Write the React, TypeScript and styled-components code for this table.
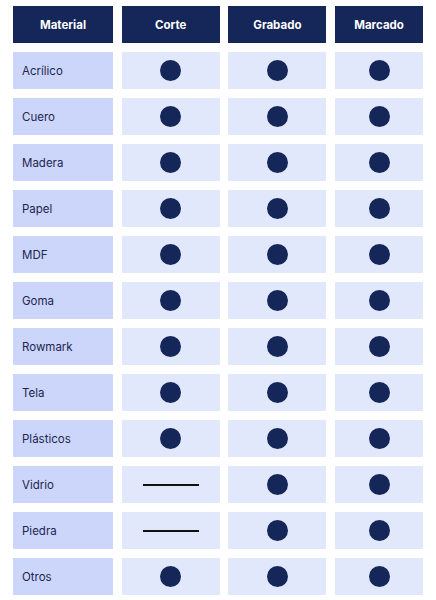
import React from "react";
import styled, { createGlobalStyle } from "styled-components";

const colors = {
  navy: "#152659",
  materialCell: "#ccd6fb",
  cell: "#e2e8fc",
  text: "#1d2550",
};

type Support = "yes" | "no";

interface MaterialRow {
  name: string;
  corte: Support;
  grabado: Support;
  marcado: Support;
}

const materials: MaterialRow[] = [
  { name: "Acrílico", corte: "yes", grabado: "yes", marcado: "yes" },
  { name: "Cuero", corte: "yes", grabado: "yes", marcado: "yes" },
  { name: "Madera", corte: "yes", grabado: "yes", marcado: "yes" },
  { name: "Papel", corte: "yes", grabado: "yes", marcado: "yes" },
  { name: "MDF", corte: "yes", grabado: "yes", marcado: "yes" },
  { name: "Goma", corte: "yes", grabado: "yes", marcado: "yes" },
  { name: "Rowmark", corte: "yes", grabado: "yes", marcado: "yes" },
  { name: "Tela", corte: "yes", grabado: "yes", marcado: "yes" },
  { name: "Plásticos", corte: "yes", grabado: "yes", marcado: "yes" },
  { name: "Vidrio", corte: "no", grabado: "yes", marcado: "yes" },
  { name: "Piedra", corte: "no", grabado: "yes", marcado: "yes" },
  { name: "Otros", corte: "yes", grabado: "yes", marcado: "yes" },
];

const headers = ["Material", "Corte", "Grabado", "Marcado"];

export default function App() {
  return (
    <>
      <GlobalStyle />
      <Table>
        {headers.map((h) => (
          <HeaderCell key={h}>{h}</HeaderCell>
        ))}
        {materials.map((m) => (
          <React.Fragment key={m.name}>
            <MaterialCell>{m.name}</MaterialCell>
            {[m.corte, m.grabado, m.marcado].map((s, i) => (
              <Cell key={i}>{s === "yes" ? <Dot /> : <Dash />}</Cell>
            ))}
          </React.Fragment>
        ))}
      </Table>
    </>
  );
}

const GlobalStyle = createGlobalStyle`
  body {
    margin: 0;
    background: #ffffff;
    font-family: "Inter", "Noto Sans", sans-serif;
  }
`;

const Table = styled.div`
  display: grid;
  grid-template-columns: 100px 98px 98px 88px;
  grid-auto-rows: 37px;
  column-gap: 8.7px;
  row-gap: 9px;
  padding: 6px 0 0 13px;
`;

const HeaderCell = styled.div`
  background: ${colors.navy};
  color: #ffffff;
  font-size: 11.5px;
  font-weight: 700;
  display: flex;
  align-items: center;
  justify-content: center;
`;

const MaterialCell = styled.div`
  background: ${colors.materialCell};
  color: ${colors.text};
  font-size: 11.5px;
  display: flex;
  align-items: center;
  padding-left: 9px;
`;

const Cell = styled.div`
  background: ${colors.cell};
  display: flex;
  align-items: center;
  justify-content: center;
`;

const Dot = styled.span`
  width: 21px;
  height: 21px;
  border-radius: 50%;
  background: ${colors.navy};
`;

const Dash = styled.span`
  width: 56px;
  height: 2px;
  background: #111111;
`;
